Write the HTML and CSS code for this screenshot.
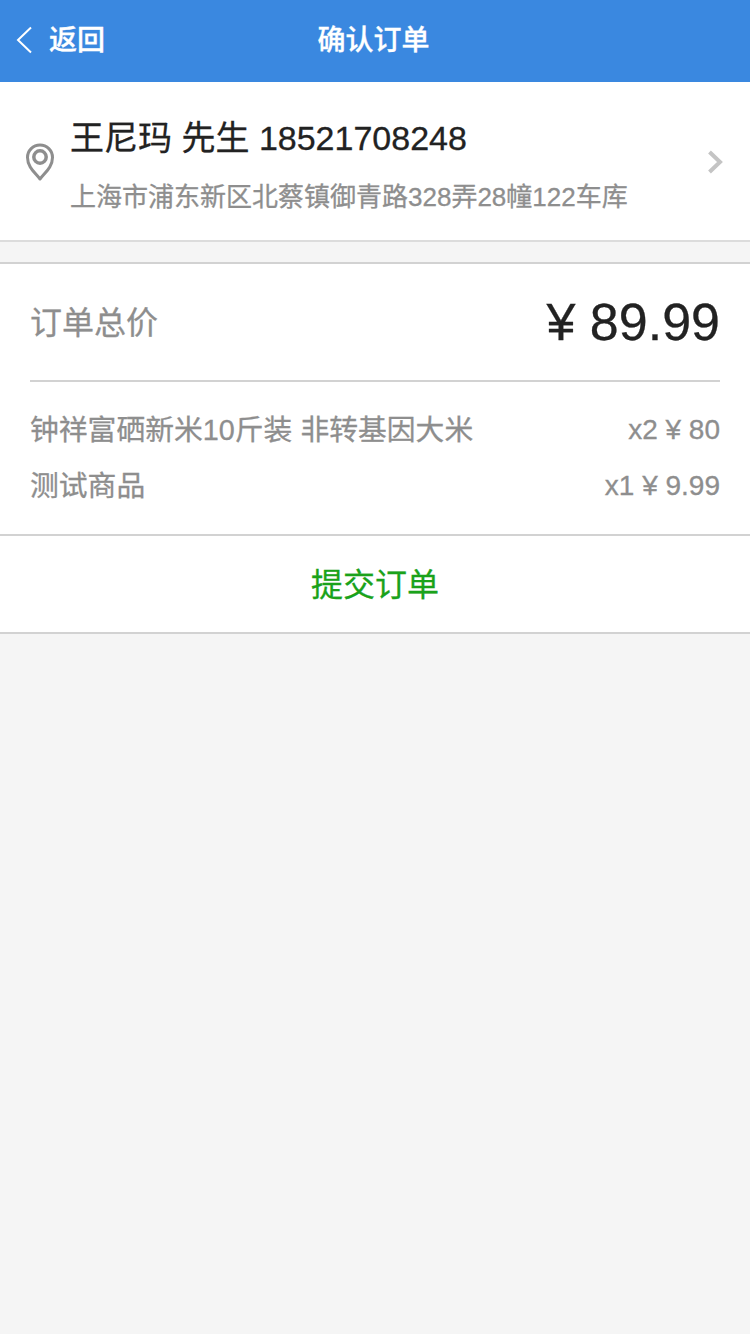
FILE: index.html
```html
<!DOCTYPE html>
<html lang="zh-CN">
<head>
  <meta charset="UTF-8">
  <meta name="viewport" content="width=device-width, initial-scale=1.0">
  <title>确认订单</title>
  <link rel="stylesheet" href="styles.css">
</head>
<body>
  <header class="top_bar">
    <a class="back">
      <svg class="back_icon" viewBox="0 0 18 28" width="18" height="28"><path d="M16 1.500 3 14l13 12.500" fill="none" stroke="#fff" stroke-width="2"/></svg>
      <span>返回</span>
    </a>
    <h1 class="title">确认订单</h1>
  </header>

  <section class="address">
    <svg class="pin" viewBox="0 0 30 38" width="30" height="38">
      <path d="M15 36 C10 29.500 2.500 24 2.500 14.500 A12.500 12.500 0 0 1 27.500 14.500 C27.500 24 20 29.500 15 36Z" fill="none" stroke="#8e8e8e" stroke-width="3" stroke-linejoin="round"/>
      <circle cx="15" cy="14" r="6.200" fill="none" stroke="#8e8e8e" stroke-width="3.500"/>
    </svg>
    <div class="address_info">
      <p class="person">王尼玛 先生 18521708248</p>
      <p class="street">上海市浦东新区北蔡镇御青路328弄28幢122车库</p>
    </div>
    <svg class="arrow" viewBox="0 0 16 24" width="16" height="24"><path d="M2.500 2 13 12 2.500 22" fill="none" stroke="#c4c4c4" stroke-width="4"/></svg>
  </section>

  <section class="order">
    <div class="total">
      <span class="total_label">订单总价</span>
      <span class="total_price">¥ 89.99</span>
    </div>
    <ul class="goods">
      <li><span class="goods_name">钟祥富硒新米10斤装 非转基因大米</span><span>x2 ¥ 80</span></li>
      <li><span class="goods_name">测试商品</span><span>x1 ¥ 9.99</span></li>
    </ul>
  </section>

  <button class="submit">提交订单</button>
</body>
</html>
```

FILE: styles.css
```css
* {margin: 0;padding: 0;box-sizing: border-box;list-style: none;}
body {background-color: #f5f5f5;font-family: "Liberation Sans", "Noto Sans CJK SC", sans-serif;color: #222;min-height: 1334px;-webkit-text-stroke: 0.3px;}

.top_bar {position: relative;display: flex;align-items: center;justify-content: center;height: 82px;background-color: #3a88e0;color: #fff;}
.title {font-size: 28px;font-weight: 500;padding: 0 3px 6px 0;}
.back {position: absolute;left: 15px;top: 25px;display: flex;align-items: center;gap: 16px;font-size: 28px;font-weight: 500;line-height: 28px;}
.back span {margin-top: 2px;}
.back_icon {display: block;}

.address {display: flex;align-items: center;height: 160px;padding: 0 27px 0 25px;background-color: #fff;border-bottom: 2px solid #dcdcdc;}
.pin {flex: none;margin-top: 2px;}
.address_info {flex: 1;margin-left: 15px;padding-top: 8px;}
.person {font-size: 34px;line-height: 40px;}
.street {font-size: 26px;line-height: 30px;margin-top: 24px;color: #8e8e8e;}
.arrow {flex: none;margin-top: 2px;}

.order {margin-top: 20px;background-color: #fff;border-top: 2px solid #d2d2d2;border-bottom: 2px solid #d2d2d2;}
.total {display: flex;justify-content: space-between;align-items: center;height: 118px;margin: 0 30px;border-bottom: 2px solid #d2d2d2;}
.total_label {font-size: 32px;color: #8e8e8e;margin-top: -4px;}
.total_price {font-size: 52px;}
.goods {padding: 20px 30px 20px;}
.goods li {display: flex;justify-content: space-between;align-items: center;height: 56px;font-size: 28px;line-height: 36px;color: #8e8e8e;}
.goods_name {font-size: 28.8px;margin-top: -1px;}

.submit {display: block;width: 100%;height: 98px;border: 0;border-bottom: 2px solid #d2d2d2;background-color: #fff;font-family: inherit;font-size: 32px;color: #1aa21a;padding-bottom: 4px;}
```
